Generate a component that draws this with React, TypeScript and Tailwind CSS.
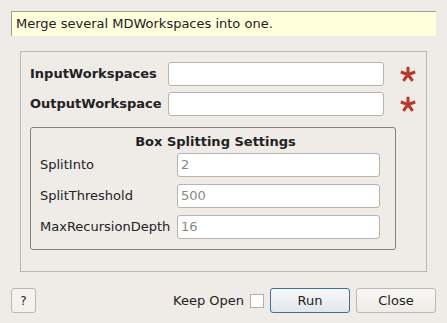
import React from 'react';

function Asterisk() {
  return (
    <svg width="16" height="16" viewBox="0 0 16 16" className="block">
      <g stroke="#b5382b" strokeWidth="3" strokeLinecap="butt">
        <line x1="8" y1="8.5" x2="8" y2="0.8" />
        <line x1="8" y1="8.5" x2="15.2" y2="6" />
        <line x1="8" y1="8.5" x2="12.6" y2="14.8" />
        <line x1="8" y1="8.5" x2="3.4" y2="14.8" />
        <line x1="8" y1="8.5" x2="0.8" y2="6" />
      </g>
    </svg>
  );
}

function TextBox({ value }: { value?: string }) {
  return (
    <div className="h-[24px] flex-1 rounded-[3px] border border-[#b8b3ad] bg-white px-[3px] flex items-center text-[#8a8a8a]">
      {value}
    </div>
  );
}

export default function App() {
  return (
    <div
      className="w-[447px] h-[323px] bg-[#efebe7] text-[13px] text-[#222] flex flex-col"
      style={{ fontFamily: '"DejaVu Sans", sans-serif' }}
    >
      <div className="mx-[11px] mt-[11px] h-[25px] bg-[#ffffdc] border-t border-l border-[#a09c97] flex items-center pl-[4px]">
        Merge several MDWorkspaces into one.
      </div>

      <div className="mx-[20px] mt-[15px] h-[221px] border border-[#bab6b1] pl-[9px] pr-[10px] pt-[10px]">
        <div className="flex items-center h-[24px]">
          <div className="w-[138px] font-bold">InputWorkspaces</div>
          <div className="w-[216px] flex"><TextBox /></div>
          <div className="flex-1 flex pl-[16px]"><Asterisk /></div>
        </div>
        <div className="flex items-center h-[24px] mt-[6px]">
          <div className="w-[138px] font-bold">OutputWorkspace</div>
          <div className="w-[216px] flex"><TextBox /></div>
          <div className="flex-1 flex pl-[16px]"><Asterisk /></div>
        </div>

        <div className="mt-[11px] w-[366px] h-[123px] border border-[#85817c] rounded-[3px] pl-[9px] pr-[15px]">
          <div className="text-center font-bold mt-[4px] h-[18px] ml-[-9px] mr-[-15px] pl-[5px]">Box Splitting Settings</div>
          <div className="flex items-center h-[24px] mt-[3px]">
            <div className="w-[137px]">SplitInto</div>
            <TextBox value="2" />
          </div>
          <div className="flex items-center h-[24px] mt-[7px]">
            <div className="w-[137px]">SplitThreshold</div>
            <TextBox value="500" />
          </div>
          <div className="flex items-center h-[24px] mt-[7px]">
            <div className="w-[137px]">MaxRecursionDepth</div>
            <TextBox value="16" />
          </div>
        </div>
      </div>

      <div className="mt-[16px] mx-[11px] flex items-center h-[25px]">
        <button className="w-[25px] h-[25px] rounded-[3px] border border-[#bab6b1] bg-[#f4f2ef] text-[12px] flex items-center justify-center">
          ?
        </button>
        <div className="flex-1" />
        <span className="mr-[6px]">Keep Open</span>
        <div className="w-[14px] h-[14px] border border-[#b2aea9] bg-white mr-[6px]" />
        <button className="w-[80px] h-[25px] rounded-[3px] border border-[#3f6f9c] bg-gradient-to-b from-[#f6f7f8] to-[#e3e7ea] flex items-center justify-center">
          Run
        </button>
        <button className="ml-[6px] w-[80px] h-[25px] rounded-[3px] border border-[#bab6b1] bg-gradient-to-b from-[#f8f7f5] to-[#eeebe8] flex items-center justify-center">
          Close
        </button>
      </div>
    </div>
  );
}
